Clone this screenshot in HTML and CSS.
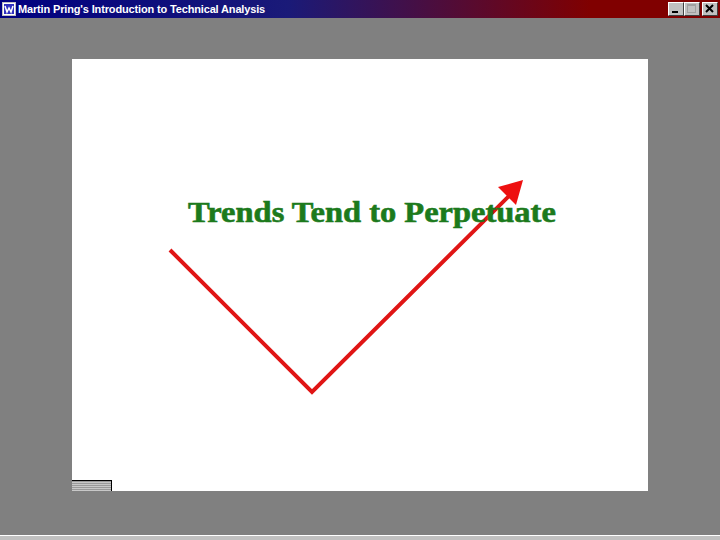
FILE: index.html
```html
<!DOCTYPE html>
<html>
<head>
<meta charset="utf-8">
<link rel="stylesheet" href="styles.css">
</head>
<body>
<div class="window">
  <div class="titlebar">
    <div class="title-left">
      <svg class="app-icon" width="14" height="14" viewBox="0 0 14 14">
        <rect x="0" y="0" width="14" height="14" fill="#c0c0c0"/>
        <rect x="1" y="1" width="12" height="12" fill="#ffffff"/>
        <rect x="2" y="2" width="10" height="10" fill="#3030c0"/>
        <path d="M3 4 L5 10 L7 6 L9 10 L11 4" stroke="#ffffff" stroke-width="1.5" fill="none"/>
      </svg>
      <span class="title-text">Martin Pring's Introduction to Technical Analysis</span>
    </div>
    <div class="title-buttons">
      <div class="tbtn"><svg width="14" height="12" viewBox="0 0 14 12"><rect x="3" y="8" width="6" height="2" fill="#000"/></svg></div>
      <div class="tbtn"><svg width="14" height="12" viewBox="0 0 14 12"><rect x="2.5" y="1.5" width="8" height="8" fill="none" stroke="#a0a0a0"/><rect x="2" y="1" width="9" height="2" fill="#a0a0a0"/></svg></div>
      <div class="tbtn close"><svg width="14" height="12" viewBox="0 0 14 12"><path d="M3 2 L10 9 M10 2 L3 9" stroke="#000" stroke-width="2"/></svg></div>
    </div>
  </div>
  <div class="workspace">
    <div class="slide">
      <svg class="chart" width="576" height="432" viewBox="0 0 576 432">
        <polyline points="98,191 240,333 440,134" fill="none" stroke="#e01515" stroke-width="4" stroke-linejoin="miter"/>
        <polygon points="451,121 444,146 426,128" fill="#ee1010"/>
      </svg>
      <h1 class="headline">Trends Tend to Perpetuate</h1>
      <div class="tab"></div>
    </div>
  </div>
  <div class="statusbar"></div>
</div>
</body>
</html>
```
FILE: styles.css
```css
html, body {
  margin: 0;
  padding: 0;
  width: 720px;
  height: 540px;
  overflow: hidden;
  background: #808080;
}
.window {
  width: 720px;
  height: 540px;
  display: flex;
  flex-direction: column;
}
.titlebar {
  height: 18px;
  flex: none;
  display: flex;
  align-items: center;
  justify-content: space-between;
  background: linear-gradient(to right, #000080 0%, #1a1a78 40%, #800000 82%, #800000 100%);
}
.title-left {
  display: flex;
  align-items: center;
  padding-left: 2px;
  gap: 2px;
}
.app-icon { display: block; }
.title-text {
  color: #ffffff;
  font-family: "Liberation Sans", Arial, sans-serif;
  font-weight: bold;
  font-size: 11px;
  letter-spacing: -0.15px;
}
.title-buttons {
  display: flex;
  padding-right: 2px;
}
.tbtn {
  width: 14px;
  height: 12px;
  background: #c0c0c0;
  border-top: 1px solid #ffffff;
  border-left: 1px solid #ffffff;
  border-right: 1px solid #404040;
  border-bottom: 1px solid #404040;
}
.tbtn svg { display: block; }
.tbtn.close { margin-left: 2px; }
.workspace {
  flex: 1;
  padding-top: 41px;
  padding-left: 72px;
}
.slide {
  position: relative;
  width: 576px;
  height: 432px;
  background: #ffffff;
}
.chart {
  position: absolute;
  left: 0;
  top: 0;
}
.headline {
  margin: 0;
  padding-top: 137px;
  padding-left: 116px;
  font-family: "Liberation Serif", "Times New Roman", serif;
  font-weight: bold;
  font-size: 29px;
  line-height: 32px;
  color: #1c7a1c;
  -webkit-text-stroke: 0.6px #1c7a1c;
  position: relative;
  white-space: nowrap;
  transform: scaleX(1.12);
  transform-origin: 116px 0;
}
.tab {
  position: absolute;
  left: 0;
  bottom: 0;
  width: 39px;
  height: 10px;
  border-top: 1px solid #000;
  border-right: 1px solid #000;
  background: repeating-linear-gradient(to bottom, #9a9a9a 0, #9a9a9a 1px, #c8c8c8 1px, #c8c8c8 2px);
}
.statusbar {
  height: 4px;
  flex: none;
  background: #c0c0c0;
  border-top: 1px solid #ffffff;
}
```
